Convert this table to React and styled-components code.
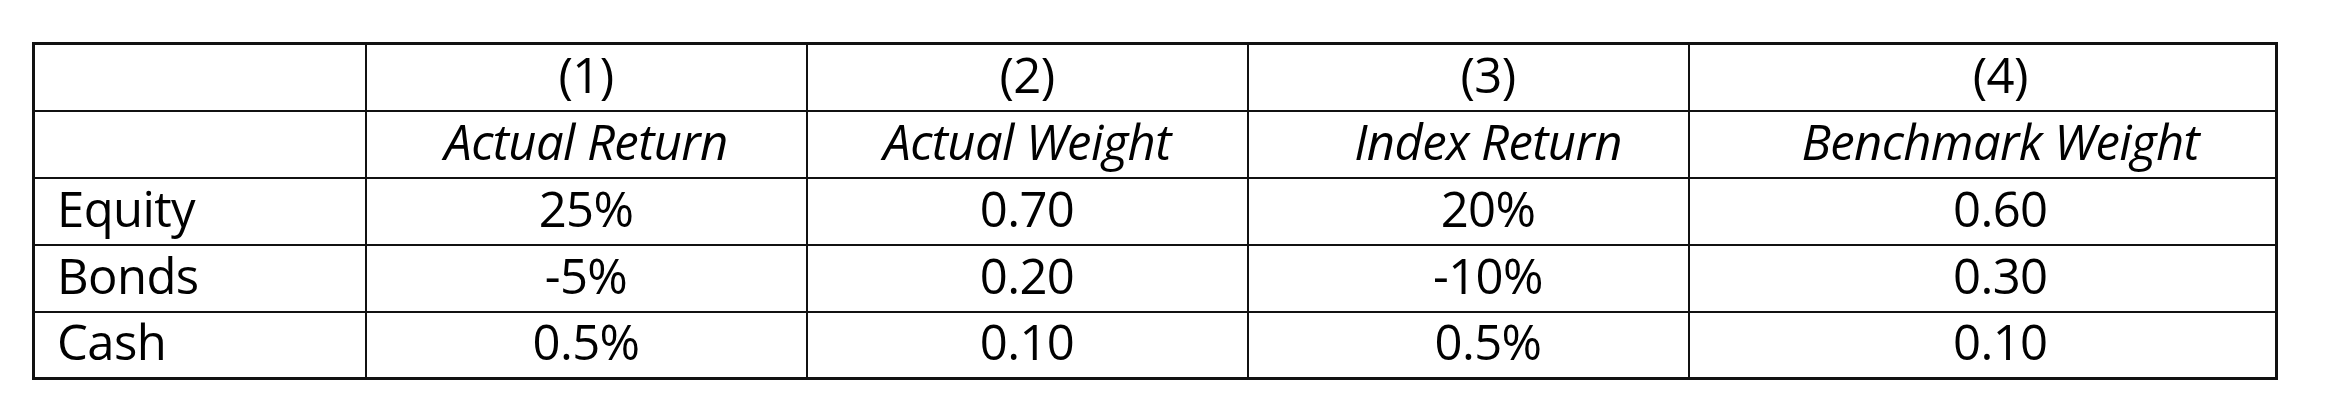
import React from "react";
import styled, { createGlobalStyle } from "styled-components";

const GlobalStyle = createGlobalStyle`
  html, body {
    margin: 0;
    padding: 0;
    background: #ffffff;
  }
  body {
    font-family: "Open Sans", "Lato", sans-serif;
    color: #000;
  }
`;

// offset: Excel put the text of the last two columns a little right of centre
const columns = [
  { label: "(1)", title: "Actual Return", offset: 0 },
  { label: "(2)", title: "Actual Weight", offset: 0 },
  { label: "(3)", title: "Index Return", offset: 40 },
  { label: "(4)", title: "Benchmark Weight", offset: 36 },
];

const rows = [
  { name: "Equity", values: ["25%", "0.70", "20%", "0.60"] },
  { name: "Bonds", values: ["-5%", "0.20", "-10%", "0.30"] },
  { name: "Cash", values: ["0.5%", "0.10", "0.5%", "0.10"] },
];

const colWidths = [332, 441, 441, 441, 588];

const Page = styled.div`
  padding: 42px 0 0 32px;
`;

const Table = styled.table`
  border-collapse: collapse;
  table-layout: fixed;
  width: 2243px;
  border: 3px solid #111;
`;

const Row = styled.tr`
  height: 67px;
`;

const Cell = styled.td`
  border: 2px solid #111;
  padding: 0 0 11px ${(p) => (p.$left ? "22px" : `${p.$offset || 0}px`)};
  vertical-align: bottom;
  text-align: ${(p) => (p.$left ? "left" : "center")};
  font-size: 49px;
  line-height: 1;
  letter-spacing: -0.6px;
  font-style: ${(p) => (p.$italic ? "italic" : "normal")};
  white-space: nowrap;
`;

export default function App() {
  return (
    <>
      <GlobalStyle />
      <Page>
        <Table>
          <colgroup>
            {colWidths.map((w, i) => (
              <col key={i} style={{ width: w }} />
            ))}
          </colgroup>
          <tbody>
            <Row>
              <Cell $left />
              {columns.map((c) => (
                <Cell key={c.label} $offset={c.offset}>
                  {c.label}
                </Cell>
              ))}
            </Row>
            <Row>
              <Cell $left />
              {columns.map((c) => (
                <Cell key={c.title} $offset={c.offset} $italic>
                  {c.title}
                </Cell>
              ))}
            </Row>
            {rows.map((r) => (
              <Row key={r.name}>
                <Cell $left>{r.name}</Cell>
                {r.values.map((v, i) => (
                  <Cell key={i} $offset={columns[i].offset}>
                    {v}
                  </Cell>
                ))}
              </Row>
            ))}
          </tbody>
        </Table>
      </Page>
    </>
  );
}
